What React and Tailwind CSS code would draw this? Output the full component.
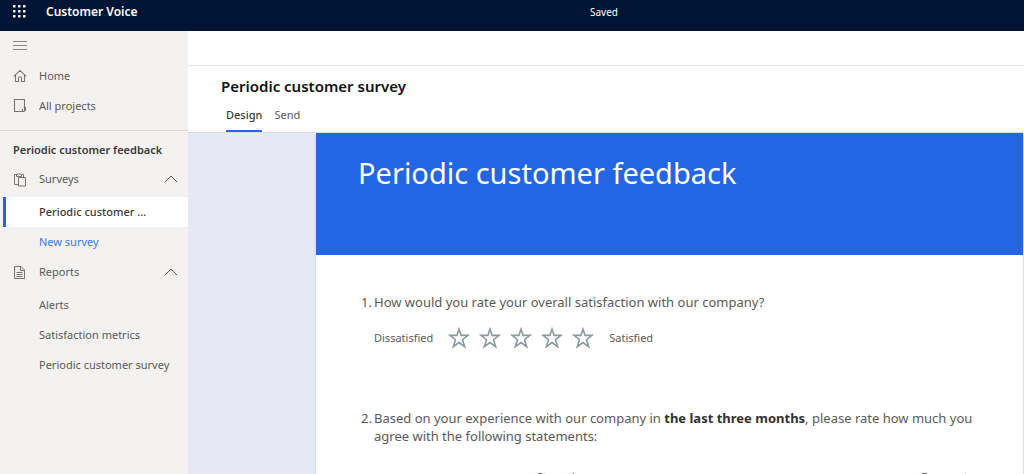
const stroke = { fill: 'none', stroke: 'currentColor', strokeWidth: 1 };

const HomeIcon = () => (
  <svg width="14" height="14" viewBox="0 0 14 14" aria-hidden="true" {...stroke} strokeWidth="1.1">
    <path d="M.8 7.400 7 1.400l6.200 6M2.500 6v6.500H5.500V9.200a1.500 1.500 0 0 1 3 0V12.500h3V6" />
  </svg>
);
const ProjectIcon = () => (
  <svg width="14" height="16" viewBox="0 0 14 16" aria-hidden="true" {...stroke} strokeWidth="1.1">
    <path d="M9.500 13.500H1.500V1.500h10v8M9.500 13.500v-2.500M9.500 13.500h1.500l1.500-1.500V9.500h-1v3" />
  </svg>
);
const SurveyIcon = () => (
  <svg width="14" height="15" viewBox="0 0 14 15" aria-hidden="true" {...stroke}>
    <path d="M5.500 12.500h-4V2.500h2M8.500 2.500h2v3M3.500 4.500v-2h1.300a1.300 1.300 0 0 1 2.500 0h1.200v2zM5.500 5.500h7v8.500h-7z" />
  </svg>
);
const ReportIcon = () => (
  <svg width="14" height="15" viewBox="0 0 14 15" aria-hidden="true" {...stroke}>
    <path d="M1.500 1.500h6.500l3.500 3.500v8.500h-10zM7.500 1.500v4h4M3.500 7.500h6M3.500 9.500h6M3.500 11.500h6" />
  </svg>
);
const Chevron = () => (
  <svg width="14" height="8" viewBox="0 0 14 8" aria-hidden="true" {...stroke}>
    <path d="M.8 7.200 7 1l6.200 6.200" />
  </svg>
);
const Star = () => (
  <svg width="22" height="22" viewBox="0 0 22 22" fill="none" stroke="#8a999d" strokeWidth="1.600" aria-hidden="true">
    <path d="M11 2.200 13.100 8.400H20L14.500 12.700 16.700 19.700 11 15.500 5.300 19.700 7.500 12.700 2 8.400H8.900z" />
  </svg>
);

const NavLink = ({ icon, children }) => (
  <a href="#" className="flex h-[30px] items-center gap-3 pl-[13px]">
    <span className="w-3.5 text-[#777573]">{icon}</span>
    {children}
  </a>
);
const GroupButton = ({ icon, children }) => (
  <button type="button" aria-expanded="true" className="flex h-8 w-full items-center gap-3 pr-[10px] pl-[13px]">
    <span className="w-3.5 text-[#777573]">{icon}</span>
    <span className="grow text-left">{children}</span>
    <Chevron />
  </button>
);
const SubLink = ({ children }) => (
  <a href="#" className="flex h-[30px] items-center pl-[39px]">{children}</a>
);

export default function App() {
  return (
    <div className="flex h-screen flex-col overflow-hidden bg-white font-['Noto_Sans',sans-serif] text-[11px] text-[#5b5957]">
      <header className="grid h-[31px] shrink-0 grid-cols-[1fr_auto_1fr] items-start bg-[#001433] text-white">
        <div className="flex items-center gap-5 pl-3">
          <button type="button" aria-label="App launcher">
            <svg width="14" height="14" viewBox="0 0 14 14" fill="currentColor" aria-hidden="true">
              {[0, 5, 10].map((y) => [0, 5, 10].map((x) => <rect key={x + '-' + y} x={x + 1} y={y} width="2.500" height="2.500" rx=".5" />))}
            </svg>
          </button>
          <span className="text-xs leading-6 font-semibold">Customer Voice</span>
        </div>
        <span className="pl-[184px] text-[10px] leading-6">Saved</span>
      </header>

      <div className="flex min-h-0 grow">
        <nav className="w-[188px] shrink-0 bg-[#f3f2f1]">
          <button type="button" aria-label="Toggle navigation" className="flex h-[30px] items-center pb-0.5 pl-[13px] text-[#8a8886]">
            <svg width="14" height="9" viewBox="0 0 14 9" aria-hidden="true" {...stroke}>
              <path d="M0 .5h14M0 4.500h14M0 8.500h14" />
            </svg>
          </button>
          <NavLink icon={<HomeIcon />}>Home</NavLink>
          <NavLink icon={<ProjectIcon />}>All projects</NavLink>
          <h2 className="mt-[9px] border-t border-[#dad9d8] pt-2.5 pb-1 pl-[13px] leading-[18px] font-semibold text-[#3b3a39]">Periodic customer feedback</h2>
          <GroupButton icon={<SurveyIcon />}>Surveys</GroupButton>
          <div className="pt-0.5">
            <a href="#" aria-current="page" className="ml-[3px] flex h-[30px] items-center border-l-[3px] border-[#2266e3] bg-white pl-[33px] font-medium text-[#3b3a39]">Periodic customer ...</a>
            <a href="#" className="flex h-[29px] items-center pt-0.5 pl-[39px] text-[#3a78e8]">New survey</a>
          </div>
          <GroupButton icon={<ReportIcon />}>Reports</GroupButton>
          <div className="pt-0.5">
            <SubLink>Alerts</SubLink>
            <SubLink>Satisfaction metrics</SubLink>
            <SubLink>Periodic customer survey</SubLink>
          </div>
        </nav>

        <main className="flex min-w-0 grow flex-col">
          <div className="h-[35px] shrink-0 border-b border-[#e6e6e6]" />
          <div className="shrink-0 border-b border-[#dcdfe8] pl-[33px]">
            <h1 className="pt-2 text-[15px] leading-6 font-semibold text-[#111]">Periodic customer survey</h1>
            <div role="tablist" className="flex gap-3 pt-2 pl-[5px]">
              <button type="button" role="tab" aria-selected="true" className="h-[26px] border-b-2 border-[#2f62d9] pb-1.5 font-medium text-[#3b3a39]">Design</button>
              <button type="button" role="tab" aria-selected="false" className="h-[26px] pb-2">Send</button>
            </div>
          </div>
          <div className="flex min-h-0 grow overflow-hidden bg-[#e6e9f3] pr-px pl-32">
            <article className="grow bg-white shadow-sm">
              <div className="h-[122px] bg-[#2266e3] px-[42px] pt-5 text-[29px] leading-10 text-white">
                <h2>Periodic customer feedback</h2>
              </div>
              <ol className="pt-[38px] pr-10 pl-[45px] text-[13px] leading-[18px]">
                <li className="flex">
                  <span className="w-[13px] shrink-0">1.</span>
                  <div>
                    <p>How would you rate your overall satisfaction with our company?</p>
                    <div className="flex items-center gap-[15px] pt-4 text-[11px]">
                      <span>Dissatisfied</span>
                      <div className="flex gap-[9px]">
                        {[1, 2, 3, 4, 5].map((n) => <button key={n} type="button" aria-label={n + ' of 5'}><Star /></button>)}
                      </div>
                      <span>Satisfied</span>
                    </div>
                  </div>
                </li>
                <li className="flex pt-[60px]">
                  <span className="w-[13px] shrink-0">2.</span>
                  <div className="grow">
                    <p>Based on your experience with our company in <strong className="text-[#323130]">the last three months</strong>, please rate how much you agree with the following statements:</p>
                    <table className="mt-6 w-full table-fixed text-[11px] leading-4">
                      <thead>
                        <tr>
                          <td className="w-[24%] p-0" />
                          <th scope="col" className="px-2 py-0 font-normal">Strongly disagree</th>
                          <td colSpan={4} />
                          <th scope="col" className="px-2 py-0 font-normal">Does not apply</th>
                        </tr>
                      </thead>
                    </table>
                  </div>
                </li>
              </ol>
            </article>
          </div>
        </main>
      </div>
    </div>
  );
}
